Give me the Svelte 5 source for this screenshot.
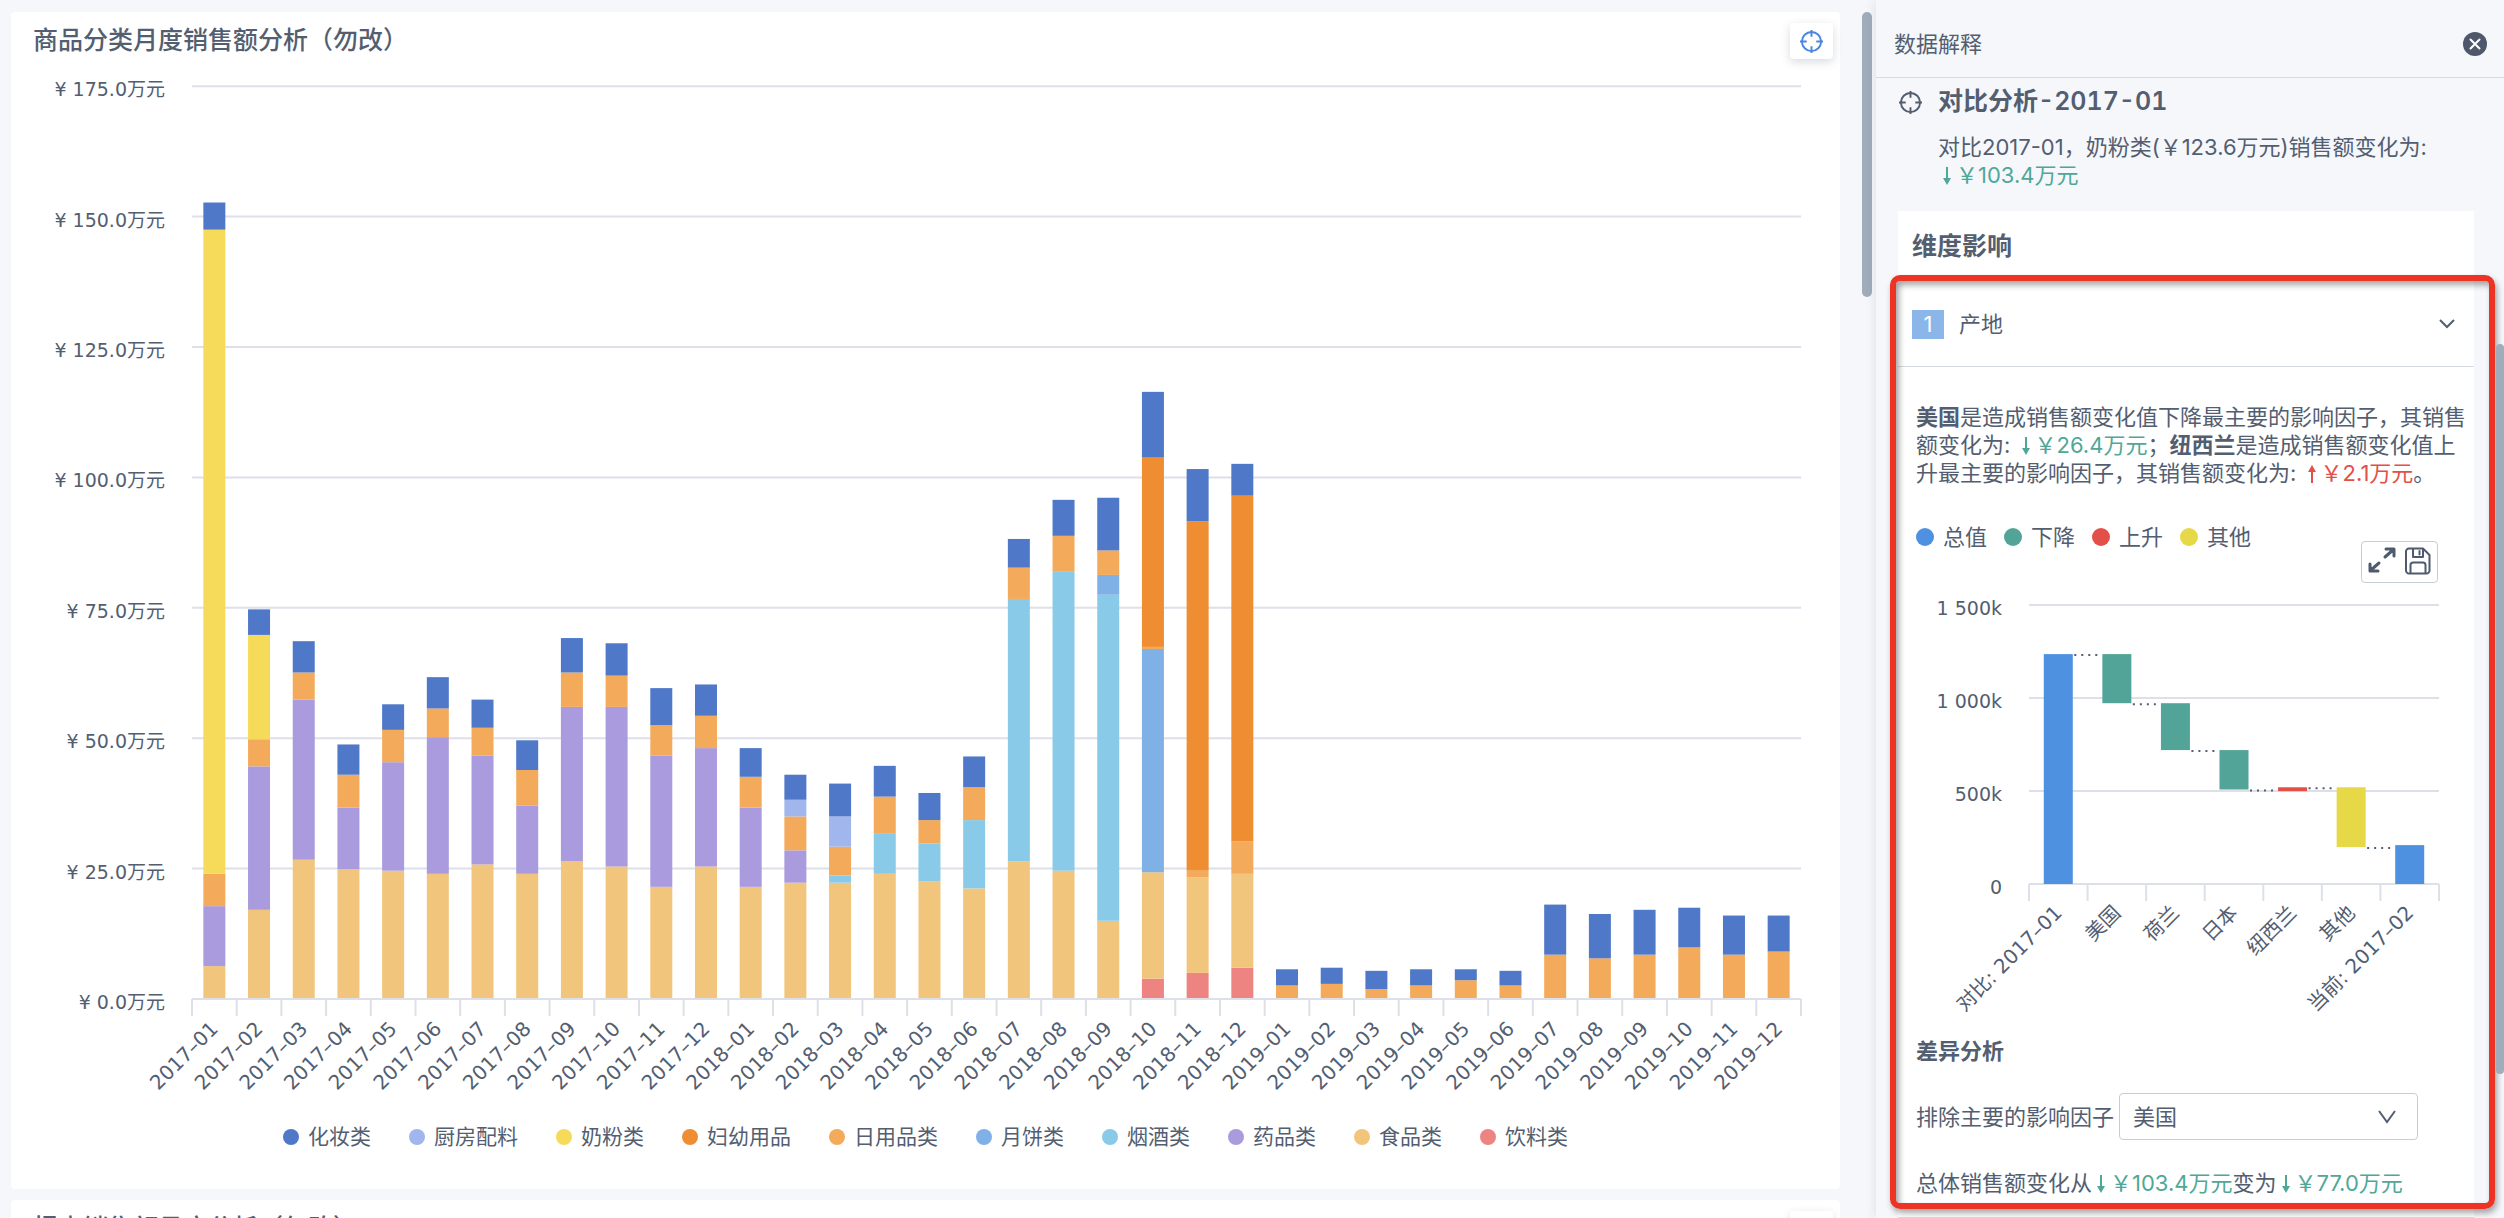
<script>
  const series = {
    cosmetics: { label: '化妆类', color: '#4f78c8' },
    kitchen: { label: '厨房配料', color: '#a0b6ec' },
    milk: { label: '奶粉类', color: '#f6db5b' },
    mother: { label: '妇幼用品', color: '#ef8d32' },
    daily: { label: '日用品类', color: '#f3ab5b' },
    mooncake: { label: '月饼类', color: '#80b1e6' },
    tobacco: { label: '烟酒类', color: '#8acae9' },
    medicine: { label: '药品类', color: '#a99bdd' },
    food: { label: '食品类', color: '#f1c57b' },
    drink: { label: '饮料类', color: '#ee8481' }
  };

  // Cumulative tops (万元) of each stack, listed from the axis upwards.
  const fmdc = (f, m, d, c) => [['food', f], ['medicine', m], ['daily', d], ['cosmetics', c]];
  const ftdc = (f, t, d, c) => [['food', f], ['tobacco', t], ['daily', d], ['cosmetics', c]];
  const dc = (d, c) => [['daily', d], ['cosmetics', c]];
  const stacks = [
    [['food', 6.3], ['medicine', 17.8], ['daily', 24], ['milk', 147.5], ['cosmetics', 152.7]],
    [['food', 17.1], ['medicine', 44.6], ['daily', 49.8], ['milk', 69.8], ['cosmetics', 74.7]],
    fmdc(26.7, 57.4, 62.6, 68.6),
    fmdc(24.9, 36.7, 43, 48.8),
    fmdc(24.6, 45.4, 51.6, 56.5),
    fmdc(24, 50.2, 55.7, 61.7),
    fmdc(25.8, 46.7, 52, 57.4),
    fmdc(24, 37.1, 43.9, 49.6),
    fmdc(26.4, 56, 62.6, 69.2),
    fmdc(25.4, 56, 62, 68.2),
    fmdc(21.5, 46.7, 52.5, 59.6),
    fmdc(25.4, 48.1, 54.3, 60.3),
    fmdc(21.5, 36.7, 42.6, 48.1),
    [['food', 22.3], ['medicine', 28.5], ['daily', 35], ['kitchen', 38.2], ['cosmetics', 43]],
    [['food', 22.3], ['tobacco', 23.7], ['daily', 29.2], ['kitchen', 35], ['cosmetics', 41.3]],
    ftdc(24, 31.8, 38.8, 44.7),
    ftdc(22.6, 29.8, 34.3, 39.5),
    ftdc(21.2, 34.3, 40.6, 46.5),
    ftdc(26.4, 76.7, 82.7, 88.2),
    ftdc(24.6, 81.9, 88.8, 95.7),
    [['food', 15], ['tobacco', 77.5], ['mooncake', 81.3], ['daily', 86], ['cosmetics', 96.1]],
    [['drink', 3.9], ['food', 24.3], ['mooncake', 67.1], ['daily', 67.5], ['mother', 103.8], ['cosmetics', 116.4]],
    [['drink', 5], ['food', 23.3], ['daily', 24.6], ['mother', 91.6], ['cosmetics', 101.6]],
    [['drink', 6], ['food', 24], ['daily', 30.2], ['mother', 96.5], ['cosmetics', 102.6]],
    dc(2.6, 5.7), dc(2.9, 6), dc(1.9, 5.4), dc(2.6, 5.7), dc(3.6, 5.7), dc(2.6, 5.4),
    dc(8.5, 18.1), dc(7.8, 16.3), dc(8.5, 17.1), dc(9.9, 17.5), dc(8.5, 16), dc(9.1, 16)
  ];

  const main = { left: 181, right: 1790, base: 939, unit: 5.216 };
  const step = (main.right - main.left) / stacks.length;
  const yOf = (v) => main.base - v * main.unit;
  const bars = stacks.map((stack, i) => ({
    month: `${2017 + Math.floor(i / 12)}–${String((i % 12) + 1).padStart(2, '0')}`,
    center: main.left + step * (i + 0.5),
    parts: stack.map(([key, top], n) => {
      const bottom = n ? stack[n - 1][1] : 0;
      return { color: series[key].color, y: yOf(top), h: (top - bottom) * main.unit };
    })
  }));
  const mainTicks = [175, 150, 125, 100, 75, 50, 25, 0];

  const fall = { left: 119, right: 529, base: 297, unit: 0.186 };
  const fallStep = (fall.right - fall.left) / 7;
  const fy = (v) => fall.base - v * fall.unit;
  const steps = [
    { label: '对比: 2017–01', from: 0, to: 1236, end: 1236, color: '#4f91e1' },
    { label: '美国', from: 972, to: 1236, end: 972, color: '#52a498' },
    { label: '荷兰', from: 720, to: 972, end: 720, color: '#52a498' },
    { label: '日本', from: 508, to: 720, end: 508, color: '#52a498' },
    { label: '纽西兰', from: 499, to: 520, end: 520, color: '#e25048' },
    { label: '其他', from: 199, to: 520, end: 199, color: '#e7d847' },
    { label: '当前: 2017–02', from: 0, to: 209, end: 209, color: '#4f91e1' }
  ];
  const fallTicks = [[1500, '1 500k'], [1000, '1 000k'], [500, '500k'], [0, '0']];
  const fallLegend = [
    ['总值', '#4f91e1'], ['下降', '#52a498'], ['上升', '#e25048'], ['其他', '#e7d847']
  ];
  const factors = ['美国', '荷兰', '日本', '纽西兰'];
</script>

{#snippet target()}
  <svg class="target" viewBox="0 0 24 24" aria-hidden="true">
    <circle cx="12" cy="12" r="10" />
    <path d="M12 0v7M12 17v7M0 12h7M17 12h7" />
  </svg>
{/snippet}

{#snippet arrow(up)}
  <svg class="arrow" class:up viewBox="0 0 8 18" aria-hidden="true">
    <path d="M3 0h2v11h3l-4 7-4-7h3z" />
  </svg>
{/snippet}

<div class="app">
  <main class="board">
    <section class="card">
      <header class="card-head">
        <h2>商品分类月度销售额分析（勿改）</h2>
        <button class="tool" type="button" aria-label="数据解释">{@render target()}</button>
      </header>
      <svg class="chart" viewBox="0 0 1829 1050" role="img" aria-label="商品分类月度销售额">
        {#each mainTicks as t}
          {#if t}
            <line class="grid" x1={main.left} x2={main.right} y1={yOf(t)} y2={yOf(t)} />
          {/if}
          <text class="num" x="154" y={yOf(t) + 10} text-anchor="end">¥ {t}.0万元</text>
        {/each}
        {#each bars as bar}
          {#each bar.parts as p}
            <rect x={bar.center - 11} y={p.y} width="22" height={p.h} fill={p.color} />
          {/each}
        {/each}
        <path class="grid" d="M{main.left} {main.base}H{main.right}" />
        {#each { length: stacks.length + 1 } as _, i}
          <path class="tick" d="M{main.left + step * i} {main.base}v17" />
        {/each}
        {#each bars as bar}
          <text
            class="num slanted"
            text-anchor="end"
            transform="translate({bar.center + 5} {main.base + 31}) rotate(-45)">{bar.month}</text>
        {/each}
      </svg>
      <ul class="legend">
        {#each Object.values(series) as s}
          <li><i style:background={s.color}></i>{s.label}</li>
        {/each}
      </ul>
    </section>
    <section class="card">
      <header class="card-head">
        <h2>报表销售额月度分析（勿改）</h2>
        <button class="tool" type="button" aria-label="数据解释">{@render target()}</button>
      </header>
    </section>
  </main>
  <div class="rail"><span class="thumb"></span></div>

  <aside class="panel">
    <header class="panel-head">
      <span>数据解释</span>
      <button class="close" type="button" aria-label="关闭">
        <svg viewBox="0 0 24 24" aria-hidden="true">
          <circle cx="12" cy="12" r="12" />
          <path d="M7.5 7.5l9 9M16.5 7.5l-9 9" />
        </svg>
      </button>
    </header>

    <div class="intro">
      {@render target()}
      <div>
        <h2>对比分析-2017-01</h2>
        <p>对比2017-01，奶粉类(￥123.6万元)销售额变化为:<br /><span class="down">{@render arrow(false)}￥103.4万元</span></p>
      </div>
    </div>

    <section class="sheet">
      <h3>维度影响</h3>
      <button class="row" type="button" aria-expanded="true">
        <span class="rank">1</span>
        <span class="row-name">产地</span>
        <svg class="chev" viewBox="0 0 16 10" aria-hidden="true"><path d="M1 1l7 7 7-7" /></svg>
      </button>

      <div class="detail">
        <p>
          <b>美国</b>是造成销售额变化值下降最主要的影响因子，其销售<br />额变化为:
          <span class="down">{@render arrow(false)}￥26.4万元</span>；<b>纽西兰</b>是造成销售额变化值上<br />升最主要的影响因子，其销售额变化为:
          <span class="rise">{@render arrow(true)}￥2.1万元</span>。
        </p>

        <div class="fall-head">
          <ul class="legend small">
            {#each fallLegend as [label, color]}
              <li><i style:background={color}></i>{label}</li>
            {/each}
          </ul>
          <div class="tools">
            <button type="button" aria-label="放大">
              <svg viewBox="0 0 28 26" aria-hidden="true">
                <path d="M17 10l8-7M18 2h8v7M11 16l-8 7M2 17v7h8" />
              </svg>
            </button>
            <button type="button" aria-label="保存">
              <svg class="save" viewBox="0 0 26 28" aria-hidden="true">
                <path d="M4 1.5h14l6.500 6.500v15.500a3 3 0 0 1-3 3h-17.500a3 3 0 0 1-3-3v-19a3 3 0 0 1 3-3z" />
                <path d="M8 2v8h10v-8M14.500 4v3.500M5.500 26v-8a2.500 2.500 0 0 1 2.500-2.500h10a2.500 2.500 0 0 1 2.500 2.500v8" />
              </svg>
            </button>
          </div>
        </div>

        <svg class="chart fall" viewBox="0 0 558 450" role="img" aria-label="产地影响瀑布图">
          {#each fallTicks as [v, label]}
            <line class="grid" x1={fall.left} x2={fall.right} y1={fy(v)} y2={fy(v)} />
            <text class="num" x="92" y={fy(v) + 10} text-anchor="end">{label}</text>
          {/each}
          {#each { length: 8 } as _, i}
            <path class="tick" d="M{fall.left + fallStep * i} {fall.base}v17" />
          {/each}
          {#each steps as s, i}
            {@const c = fall.left + fallStep * (i + 0.5)}
            <rect x={c - 14.5} y={fy(s.to)} width="29" height={(s.to - s.from) * fall.unit} fill={s.color} />
            {#if i < 6}
              <path class="link" d="M{c + 16} {fy(s.end) + 1}H{c + fallStep - 15}" />
            {/if}
            <text
              class="num slanted"
              text-anchor="end"
              transform="translate({c + 5} {fall.base + 30}) rotate(-45)">{s.label}</text>
          {/each}
        </svg>

        <h4>差异分析</h4>
        <div class="field">
          <label for="factor">排除主要的影响因子</label>
          <div class="select">
            <select id="factor">
              {#each factors as f}<option>{f}</option>{/each}
            </select>
            <svg viewBox="0 0 20 14" aria-hidden="true"><path d="M2 1l8 11 8-11" /></svg>
          </div>
        </div>
        <p class="total">总体销售额变化从<span class="down">{@render arrow(false)}￥103.4万元</span>变为<span class="down">{@render arrow(false)}￥77.0万元</span></p>
      </div>
    </section>
    <div class="marker"></div>
    <span class="thumb side"></span>
  </aside>
</div>

<style>
  :global(body) {
    background: #f5f7fb;
  }
  .app {
    display: flex;
    height: 100vh;
    overflow: hidden;
    color: #535e71;
    font: 22px/28px Inter, 'Noto Sans CJK SC', sans-serif;
  }
  h2, h3, h4, p, ul {
    margin: 0;
    padding: 0;
  }
  button {
    padding: 0;
    border: 0;
    background: none;
    color: inherit;
    font: inherit;
    cursor: pointer;
  }
  svg {
    display: block;
    flex: none;
  }

  .board {
    flex: 1;
    min-width: 0;
    padding: 12px 22px 0 11px;
    display: flex;
    flex-direction: column;
    gap: 11px;
  }
  .card {
    flex: none;
    padding-bottom: 25px;
    border-radius: 4px;
    background: #fff;
  }
  .card-head {
    display: flex;
    justify-content: space-between;
    height: 48px;
    padding: 11px 7px 0 22px;
    box-sizing: border-box;
  }
  .card-head h2 {
    font-size: 25px;
    font-weight: 500;
    line-height: 34px;
  }
  .tool {
    display: grid;
    place-items: center;
    width: 43px;
    height: 36px;
    border-radius: 4px;
    background: #fff;
    box-shadow: 0 3px 10px rgba(60, 75, 100, 0.2);
    color: #4a86de;
  }
  .target {
    width: 23px;
    height: 23px;
    fill: none;
    stroke: currentColor;
    stroke-width: 2;
  }
  .chart {
    width: 100%;
    height: auto;
  }
  .num {
    fill: #535e71;
    font: 19px 'DejaVu Sans', 'Noto Sans CJK SC', sans-serif;
  }
  .slanted {
    font-size: 20px;
  }
  .grid, .tick {
    fill: none;
    stroke: #dde0e9;
    stroke-width: 2;
  }
  .link {
    fill: none;
    stroke: #535e71;
    stroke-width: 2;
    stroke-dasharray: 2 5;
  }
  .legend {
    display: flex;
    justify-content: center;
    align-items: center;
    gap: 38px;
    height: 54px;
    font-size: 21px;
    list-style: none;
  }
  .legend li {
    display: flex;
    align-items: center;
    gap: 9px;
  }
  .legend i {
    width: 16px;
    height: 16px;
    border-radius: 50%;
  }

  .rail {
    flex: none;
    width: 10px;
    padding-top: 12px;
  }
  .thumb {
    display: block;
    width: 10px;
    height: 285px;
    border-radius: 5px;
    background: #9eacbb;
  }

  .panel {
    position: relative;
    flex: none;
    width: 628px;
    margin-left: 4px;
    background: #f5f7fb;
    box-shadow: -3px 0 8px rgba(80, 95, 115, 0.1);
  }
  .panel-head {
    display: flex;
    align-items: center;
    justify-content: space-between;
    height: 78px;
    padding: 10px 17px 0 18px;
    box-sizing: border-box;
    border-bottom: 1px solid #d6dae2;
  }
  .close svg {
    width: 24px;
    height: 24px;
    fill: #4e586a;
  }
  .close path {
    stroke: #fff;
    stroke-width: 2;
    stroke-linecap: round;
  }
  .intro {
    display: flex;
    gap: 16px;
    height: 133px;
    padding: 7px 0 0 23px;
    box-sizing: border-box;
  }
  .intro .target {
    margin-top: 6px;
  }
  .intro h2 {
    margin-bottom: 15px;
    font-size: 25px;
    line-height: 33px;
    font-weight: 600;
    font-variant-numeric: tabular-nums;
  }
  .down {
    color: #4fa897;
  }
  .rise {
    color: #e25048;
  }
  .arrow {
    display: inline-block;
    width: 8px;
    height: 18px;
    margin: 0 5px;
    fill: currentColor;
    vertical-align: -2px;
  }
  .arrow.up {
    transform: rotate(180deg);
  }

  .sheet {
    margin: 0 30px 0 22px;
    background: #fff;
  }
  .sheet h3 {
    padding: 18px 14px 19px;
    font-size: 25px;
    line-height: 34px;
    font-weight: 600;
  }
  .row {
    display: flex;
    align-items: center;
    width: 100%;
    height: 85px;
    padding: 0 19px 0 14px;
    box-sizing: border-box;
    border-bottom: 1px solid #d6dae2;
    text-align: left;
  }
  .rank {
    width: 32px;
    line-height: 29px;
    background: #8ab6ea;
    color: #fff;
    text-align: center;
  }
  .row-name {
    flex: 1;
    margin-left: 15px;
  }
  .chev {
    width: 16px;
    height: 10px;
  }
  .chev path, .select path {
    fill: none;
    stroke: #535e71;
    stroke-width: 2;
  }
  .detail {
    padding: 36px 0 20px 18px;
    border-bottom: 1px solid #d6dae2;
  }
  .detail p {
    white-space: nowrap;
  }
  .fall-head {
    display: flex;
    justify-content: space-between;
    height: 100px;
    padding: 36px 36px 0 0;
    box-sizing: border-box;
  }
  .legend.small {
    height: 28px;
    gap: 17px;
    font-size: 22px;
  }
  .small i {
    width: 18px;
    height: 18px;
  }
  .tools {
    display: flex;
    align-items: flex-start;
    gap: 9px;
    height: 42px;
    margin-top: 18px;
    padding: 5px 6px 0;
    box-sizing: border-box;
    border: 1px solid #c6ccda;
    border-radius: 4px;
  }
  .tools svg {
    width: 28px;
    height: 26px;
    fill: none;
    stroke: #4e5b6e;
    stroke-width: 3;
    stroke-linecap: round;
    stroke-linejoin: round;
  }
  .tools .save {
    width: 26px;
    height: 28px;
    stroke-width: 2;
  }
  .fall {
    margin-left: -6px;
    margin-right: -1px;
    width: 558px;
    max-width: 100%;
  }
  h4 {
    font-size: 22px;
    font-weight: 600;
  }
  .field {
    display: flex;
    align-items: center;
    gap: 5px;
    margin: 28px 0 29px;
  }
  .select {
    display: flex;
    align-items: center;
    width: 299px;
  }
  select {
    flex: 1;
    width: 100%;
    height: 47px;
    padding: 0 13px;
    appearance: none;
    border: 1px solid #c6ccda;
    border-radius: 4px;
    background: #fff;
    color: inherit;
    font: inherit;
  }
  .select svg {
    width: 20px;
    height: 14px;
    margin-left: -41px;
    margin-right: 21px;
    pointer-events: none;
  }

  .marker {
    position: absolute;
    top: 275px;
    right: 9px;
    left: 14px;
    height: 934px;
    box-sizing: border-box;
    border: 6px solid #ed3323;
    border-radius: 10px;
    box-shadow: 2px 4px 6px rgba(0, 0, 0, 0.35), inset 3px 4px 6px rgba(0, 0, 0, 0.35);
    pointer-events: none;
  }
  .side {
    position: absolute;
    top: 344px;
    right: 0;
    width: 8px;
    height: 730px;
  }
</style>
